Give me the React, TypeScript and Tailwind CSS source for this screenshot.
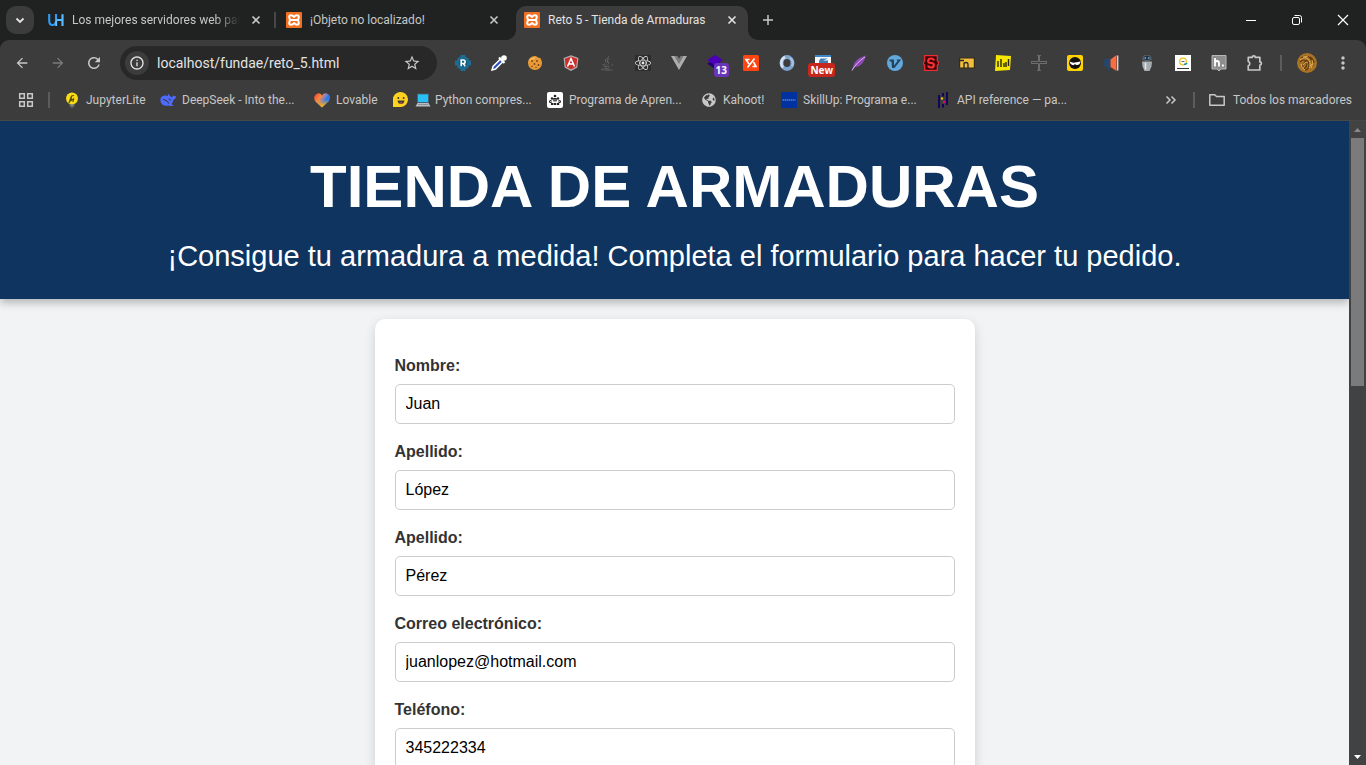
import type { ReactNode } from "react";
import { FaJava, FaReact, FaGlobeAmericas } from "react-icons/fa";
import {
  MdArrowBack,
  MdArrowForward,
  MdRefresh,
  MdStarBorder,
  MdInfoOutline,
  MdMoreVert,
} from "react-icons/md";

function Svg({ children, size = "size-4" }: { children: ReactNode; size?: string }) {
  return (
    <svg viewBox="0 0 16 16" className={`${size} shrink-0`} fill="none" aria-hidden="true">
      {children}
    </svg>
  );
}

const CloseGlyph = () => (
  <Svg>
    <path d="M4.5 4.5l7 7M11.5 4.5l-7 7" stroke="currentColor" strokeWidth="1.6" />
  </Svg>
);

const Xampp = () => (
  <Svg>
    <rect width="16" height="16" rx="1" fill="#f37021" />
    <path
      d="M8 5Q6.500 3.200 5 3.200 3.200 3.200 3.200 5q0 1.800 1.200 3-1.200 1.200-1.200 3 0 1.800 1.800 1.800T8 11q1.500 1.800 3 1.800 1.800 0 1.800-1.800 0-1.800-1.200-3 1.200-1.200 1.200-3 0-1.800-1.800-1.800T8 5z"
      stroke="#fff"
      strokeWidth="2"
      strokeLinejoin="round"
    />
    <path d="M5 8h6" stroke="#fff" strokeWidth="2" />
  </Svg>
);

const HostingLogo = () => (
  <Svg>
    <path d="M1.200 2v6.200c0 3.200 1.200 4.800 3.400 4.800S8 11.400 8 8.600V2" stroke="#2f9bf5" strokeWidth="2.100" />
    <path d="M8.200 8H14M14.500 2.200V14" stroke="#56b8ff" strokeWidth="2.200" />
    <path d="M8.200 9V14" stroke="#6fc4ff" strokeWidth="1.800" />
  </Svg>
);

const tabs = [
  { title: "Los mejores servidores web para", icon: <HostingLogo />, active: false, fade: true },
  { title: "¡Objeto no localizado!", icon: <Xampp />, active: false, fade: false },
  { title: "Reto 5 - Tienda de Armaduras", icon: <Xampp />, active: true, fade: false },
];

function TabStrip() {
  return (
    <div className="flex h-10 items-end bg-[#1f2221] text-[#c7c7c7]">
      <button aria-label="Buscar pestañas" className="mb-1.5 ml-1.5 flex size-7 shrink-0 items-center justify-center rounded-[10px] bg-[#3c3c3c] text-[#e3e3e3]">
        <Svg>
          <path d="M4.500 6.500L8 10l3.500-3.500" stroke="currentColor" strokeWidth="1.800" />
        </Svg>
      </button>
      <div className="ml-1.5 flex h-[34px] gap-1.5">
        {tabs.map((t, i) => (
          <div
            key={t.title}
            className={`relative flex w-[232px] items-center px-2 pb-1.5 ${
              t.active ? "rounded-t-[10px] bg-[#3c3c3c] text-[#e3e3e3]" : ""
            }`}
          >
            {t.icon}
            <span
              className={`ml-2 flex-1 overflow-hidden whitespace-nowrap text-[12px] leading-4 ${
                t.fade ? "mask-r-from-85% mask-r-to-100%" : ""
              }`}
            >
              {t.title}
            </span>
            <button aria-label="Cerrar pestaña" className="ml-2 shrink-0">
              <CloseGlyph />
            </button>
            {i === 0 && <span className="absolute -right-1 top-1.5 h-4 w-0.5 bg-[#474948]" />}
            {t.active && (
              <>
                <svg viewBox="0 0 10 10" className="absolute -left-2.5 bottom-0 size-2.5" aria-hidden="true">
                  <path d="M10 0v10H0A10 10 0 0 0 10 0z" fill="#3c3c3c" />
                </svg>
                <svg viewBox="0 0 10 10" className="absolute -right-2.5 bottom-0 size-2.5" aria-hidden="true">
                  <path d="M0 0v10h10A10 10 0 0 1 0 0z" fill="#3c3c3c" />
                </svg>
              </>
            )}
          </div>
        ))}
      </div>
      <button aria-label="Nueva pestaña" className="mb-1.5 ml-1.5 flex size-7 items-center justify-center">
        <Svg>
          <path d="M8 3v10M3 8h10" stroke="currentColor" strokeWidth="1.500" />
        </Svg>
      </button>
      <div className="ml-auto flex h-10 text-white">
        <button aria-label="Minimizar" className="flex w-[46px] items-center justify-center">
          <Svg><path d="M3 8.500h10" stroke="currentColor" /></Svg>
        </button>
        <button aria-label="Restaurar" className="flex w-[46px] items-center justify-center">
          <Svg>
            <rect x="3.500" y="5.500" width="7" height="7" rx="1.500" stroke="currentColor" />
            <path d="M5.500 3.500h5a2 2 0 0 1 2 2v5" stroke="currentColor" />
          </Svg>
        </button>
        <button aria-label="Cerrar" className="flex w-[46px] items-center justify-center">
          <Svg><path d="M3 3l10 10M13 3L3 13" stroke="currentColor" strokeWidth="1.200" /></Svg>
        </button>
      </div>
    </div>
  );
}

const extensions: { name: string; icon: ReactNode; badge?: string; badgeClass?: string }[] = [
  {
    name: "R",
    icon: (
      <Svg>
        <path d="M5.500 0h5v2l3 1v2.500H16v5h-2.500V13l-3 1v2h-5v-2l-3-1v-2.500H0v-5h2.500V3l3-1z" fill="#1b6f96" />
        <circle cx="8" cy="8" r="4.600" fill="#155c80" />
        <path d="M6.200 11.200V5h2.200a1.700 1.700 0 0 1 0 3.500H6.200M8.300 8.500l1.900 2.700" stroke="#fff" strokeWidth="1.600" />
      </Svg>
    ),
  },
  {
    name: "Cuentagotas",
    icon: (
      <Svg>
        <path d="M1 15l1-3.500 7.500-7.500 2.500 2.500L4.500 14z" fill="#2c4fc4" stroke="#fff" strokeWidth="1.500" />
        <path d="M8 2.500L13.500 8M10.500 5.500L13.500 2.500" stroke="#fff" strokeWidth="2.200" />
        <circle cx="13" cy="3" r="2.800" fill="#fff" />
      </Svg>
    ),
  },
  {
    name: "Cookies",
    icon: (
      <Svg>
        <path d="M8 1c1 0 1.500.5 2.500 1 .5 1 2 .8 3 1 .3 1.500 1.500 3 1.500 5a7 7 0 0 1-14 0c0-4 3-7 7-7z" fill="#e99a35" />
        <path d="M3 5.500a6 5 0 0 1 5-2.500" stroke="#f7c268" strokeWidth="1.500" />
        <g fill="#74421b"><circle cx="5" cy="6" r=".9" /><circle cx="10" cy="6" r=".9" /><circle cx="7.500" cy="9" r=".9" /><circle cx="11.500" cy="10" r=".9" /><circle cx="5" cy="11.500" r=".8" /><circle cx="9" cy="12.500" r=".7" /></g>
      </Svg>
    ),
  },
  {
    name: "Angular",
    icon: (
      <Svg>
        <path d="M8 .3l7.400 2.600-1.100 9.600L8 15.900l-6.300-3.400L.6 2.900z" fill="#b3b3b3" />
        <path d="M8 1.500l6.200 2.200-1 8L8 14.600l-5.200-2.900-1-8z" fill="#c9302c" />
        <path d="M4.500 11.500L8 3.500l3.500 8M5.800 9h4.400" stroke="#fff" strokeWidth="1.500" />
      </Svg>
    ),
  },
  { name: "Java", icon: <FaJava className="size-4 text-[#6b6b6b]" /> },
  {
    name: "React",
    icon: (
      <span className="flex size-4 items-center justify-center bg-[#2d2d2d]">
        <FaReact className="size-4 text-[#e8e8e8]" />
      </span>
    ),
  },
  {
    name: "Vue",
    icon: (
      <Svg>
        <path d="M0 1h4l4 7 4-7h4L8 15z" fill="#adadad" />
        <path d="M3.500 1h3L8 3.800 9.500 1h3L8 9z" fill="#7b7b7b" />
      </Svg>
    ),
  },
  {
    name: "Capas",
    badge: "13",
    badgeClass: "bg-[#6a35b8] -right-1.5",
    icon: (
      <Svg>
        <path d="M0 8.500L8 5l8 4-8 5z" fill="#240070" />
        <path d="M0 5l8-5 8 5-8 5.500z" fill="#4b00b8" />
      </Svg>
    ),
  },
  {
    name: "Código",
    icon: (
      <Svg>
        <rect width="16" height="16" rx="1.500" fill="#fc4510" />
        <path d="M6.500 4.500H3L6 9M11.500 3.500L4.500 12.500M10.500 7l2.500 4.500H9.500" stroke="#fff" strokeWidth="1.600" />
      </Svg>
    ),
  },
  {
    name: "Anillo",
    icon: (
      <Svg>
        <ellipse cx="8" cy="8" rx="5.500" ry="6" stroke="#7fa5cf" strokeWidth="4" />
        <path d="M4 12.500A6 6.500 0 0 1 6 2" stroke="#d7e3f1" strokeWidth="2.500" />
        <path d="M11 3a6 6 0 0 1 2 8" stroke="#a9c2e0" strokeWidth="2" />
      </Svg>
    ),
  },
  {
    name: "Novedades",
    badge: "New",
    badgeClass: "bg-[#c5271d] -right-1",
    icon: (
      <Svg>
        <rect width="16" height="16" fill="#f5f7fa" />
        <path d="M0 0h16v2H0z" fill="#3f86c4" />
        <path d="M13 3.500H6Q4 4 4 8h9V5.500H8" fill="#3f7fb5" />
      </Svg>
    ),
  },
  {
    name: "Pluma",
    icon: (
      <Svg>
        <path d="M15 .5C13 1 5 3 2.500 10L1 15l2.500-2.500C11 11 13 7 15 .5z" fill="#8b49b4" />
        <path d="M1 15.500C4 10 8 6 14 2" stroke="#d9b6ec" strokeWidth="1" />
      </Svg>
    ),
  },
  {
    name: "V",
    icon: (
      <Svg>
        <circle cx="8" cy="8" r="8" fill="#61a8dd" />
        <path d="M2.500 4.500H7v6L10.500 6 9.500 4.500h4.700L7.500 13H5L4.500 6.500h-2z" fill="#26435c" />
      </Svg>
    ),
  },
  {
    name: "S",
    icon: (
      <Svg>
        <path d="M1.700.7h12.600v5L16 8l-1.700 2.300v5H1.700v-5L0 8l1.700-2.300z" fill="#3b0608" stroke="#f02b30" strokeWidth="1.300" />
        <path d="M11 5.500Q10.500 3.500 8 3.500T5.200 5.800 8 8t2.800 2.300T8 12.500 5 10.500" stroke="#ff3035" strokeWidth="2.200" />
      </Svg>
    ),
  },
  {
    name: "Carpeta",
    icon: (
      <Svg>
        <path d="M.6 3h14.800v10H.6z" fill="#f0bd3d" stroke="#352b16" strokeWidth="1.200" />
        <path d="M1 5.500h4M5 13V7.500M5 9q0-1.500 2-1.500T9 9.500V13" stroke="#262626" strokeWidth="1.300" />
      </Svg>
    ),
  },
  {
    name: "Gráfico",
    icon: (
      <Svg>
        <path d="M1 0l15 1-1 14-15 1z" fill="#f7e600" />
        <path d="M3 12V6M6 12V4M9 12V8M11 12V7M13.500 11V4" stroke="#29270d" strokeWidth="1.400" />
      </Svg>
    ),
  },
  {
    name: "Cruz",
    icon: (
      <Svg>
        <path d="M7.500 1v5.500H1M8.500 1v5.500H15M7.500 15V8.500H1M8.500 15V8.500H15M6 .6h4M6 15.400h4M.6 6v3M15.400 6v3" stroke="#747474" strokeWidth=".9" />
      </Svg>
    ),
  },
  {
    name: "Ninja",
    icon: (
      <Svg>
        <rect width="16" height="16" rx="2" fill="#ffd400" />
        <circle cx="8" cy="8" r="6" fill="#111" />
        <path d="M2.500 6.500Q5.500 8 8 7.500T13.500 6.500Q13 10 10 10 8.500 10 8 9 7 10.500 5.500 10 3 9.500 2.500 6.500z" fill="#fff" />
      </Svg>
    ),
  },
  {
    name: "Megáfono",
    icon: (
      <Svg>
        <path d="M8 3.500H4Q.3 4 .3 8T4 12l1 4 1.500-.5.500-3.500h1z" fill="#29466a" />
        <path d="M7.500 4.500L13.500 0v16l-6-4z" fill="#fb6c3f" />
        <path d="M14.700.5v15" stroke="#c8d1dd" strokeWidth="1.400" />
      </Svg>
    ),
  },
  {
    name: "Robot",
    icon: (
      <Svg>
        <path d="M3 6.500h10l-.5 5L10.500 16h-5l-2-4.500z" fill="#a8adb2" />
        <path d="M4 4.500Q4 0 8 0t4 4.500q-4 2.500-8 0z" fill="#25303a" stroke="#89939c" strokeWidth=".6" />
        <path d="M6.500 7.500v7" stroke="#e4e8ec" strokeWidth="1.500" />
        <path d="M5.500 3h1.600M8.900 3h1.600" stroke="#69b7ff" strokeWidth="1.300" />
      </Svg>
    ),
  },
  {
    name: "Q",
    icon: (
      <Svg>
        <rect width="16" height="16" fill="#fff" />
        <circle cx="8" cy="6.500" r="3.300" stroke="#f1c21b" strokeWidth="1.300" />
        <path d="M6.500 6.500h3" stroke="#666" />
        <path d="M9 9q2 .8 3-1" stroke="#168dac" strokeWidth="1.500" />
        <path d="M2 13.500h12" stroke="#333" strokeWidth="1" />
      </Svg>
    ),
  },
  {
    name: "Hypothesis",
    icon: (
      <Svg>
        <path d="M1 .5h14V14H10l-2 2-2-2H1z" fill="#8d8d8d" stroke="#b7b7b7" />
        <path d="M4 3v8.500M4 8q0-2 2-2t2 2v3.500M11 10.500h1.800" stroke="#fff" strokeWidth="1.800" />
      </Svg>
    ),
  },
  {
    name: "Extensiones",
    icon: (
      <Svg size="size-[18px]">
        <path d="M2 3h3.500a1.400 1.400 0 0 1 2.800 0h4v4a1.400 1.400 0 0 1 0 2.800v4.400H2v-3.700a2 2 0 0 0 0-3.800z" stroke="#c7c7c7" strokeWidth="1.500" strokeLinejoin="round" />
      </Svg>
    ),
  },
];

function Toolbar() {
  return (
    <div className="flex h-[46px] items-center rounded-t-[9px] bg-[#3c3c3c] pl-1 pr-[5px] text-[#c7c7c7]">
      <button aria-label="Atrás" className="flex w-9 justify-center"><MdArrowBack className="size-4" /></button>
      <button aria-label="Adelante" className="flex w-9 justify-center text-[#7a7a7a]"><MdArrowForward className="size-4" /></button>
      <button aria-label="Recargar" className="flex w-9 justify-center"><MdRefresh className="size-[18px]" /></button>
      <div className="mx-2 flex h-[34px] min-w-0 flex-1 items-center rounded-full bg-[#282828] pl-[5px] pr-4">
        <button aria-label="Información del sitio" className="flex size-6 shrink-0 items-center justify-center rounded-full bg-[#3c3c3c]">
          <MdInfoOutline className="size-4 text-[#e3e3e3]" />
        </button>
        <input
          aria-label="Barra de direcciones"
          defaultValue="localhost/fundae/reto_5.html"
          className="ml-2 min-w-0 flex-1 bg-transparent text-[14px] leading-5 text-[#e3e3e3] outline-none"
        />
        <button aria-label="Añadir a marcadores"><MdStarBorder className="size-[18px]" /></button>
      </div>
      {extensions.map((e) => (
        <button key={e.name} aria-label={e.name} className="flex w-9 shrink-0 justify-center">
          <span className="relative flex size-4 items-center justify-center">
            {e.icon}
            {e.badge && (
              <span className={`absolute -bottom-1.5 flex h-3.5 items-center rounded-[3px] px-0.5 font-['Open_Sans',sans-serif] text-[10px] font-bold leading-3 text-white ${e.badgeClass}`}>
                {e.badge}
              </span>
            )}
          </span>
        </button>
      ))}
      <span className="mx-[7px] h-4 w-0.5 shrink-0 bg-[#5c5c5c]" />
      <button aria-label="Perfil" className="flex w-9 shrink-0 justify-center">
        <svg viewBox="0 0 20 20" className="size-5" aria-hidden="true">
          <circle cx="10" cy="10" r="10" fill="#a87325" />
          <path d="M4 5q6-4 9 0t3 8M3 9q4-4 6 0t-2 7M9 7q4 2 3 6t-4 4M13 4q4 3 4 6M5 14l3-5 4 2" fill="none" stroke="#5f380e" strokeWidth="1.200" />
          <path d="M3 7q5-4 8-1t2 7M6 12q2-4 5-2M12 15l3-4M6 4l5-1M15 7q2 4-1 8M4 11q0 4 4 6" fill="none" stroke="#e0ad52" />
        </svg>
      </button>
      <button aria-label="Menú" className="flex w-9 shrink-0 justify-center"><MdMoreVert className="size-5" /></button>
    </div>
  );
}

const bookmarks: { label: string; width: string; icon: ReactNode; laptop?: boolean }[] = [
  {
    label: "JupyterLite",
    width: "w-24",
    icon: (
      <Svg>
        <path d="M5.500 12h5v2L8 16l-2.500-2z" fill="#707070" />
        <circle cx="8" cy="6.500" r="6" fill="#f7dc18" />
        <path d="M5 11L7.500 4 7 8.500 9.500 7 9 10M7.500 4L10 3.500" stroke="#5a4b08" strokeWidth="1.200" />
      </Svg>
    ),
  },
  {
    label: "DeepSeek - Into the...",
    width: "w-[154px]",
    icon: (
      <Svg>
        <path d="M.5 6.500Q2 3 6 3.500l1.500.8Q8.500 3 8 1.500q1 1.500 3.500 4Q13 5 13 3.500q1.500 1 3 .5 0 3-2.500 3.500-.5 3-2 4.500l2 1.500q-3 1-5 0Q2 14.500.7 10q-.4-2-.2-3.500z" fill="#4d6bfe" />
        <path d="M3 7.500q3 0 6 4M8.500 7q1.500 0 2 1.500" stroke="#3c3c3c" strokeWidth="1.200" />
      </Svg>
    ),
  },
  {
    label: "Lovable",
    width: "w-[79px]",
    icon: (
      <Svg>
        <defs>
          <linearGradient id="heart" x1="0" y1="0" x2="1" y2=".6">
            <stop offset="0.1" stopColor="#f5503c" /><stop offset=".4" stopColor="#f58a3a" /><stop offset=".6" stopColor="#8f7fc0" /><stop offset=".75" stopColor="#2a7de8" />
          </linearGradient>
          <linearGradient id="heartBase" x1="0" y1="0" x2="0" y2="1">
            <stop offset=".45" stopColor="#f5a623" stopOpacity="0" /><stop offset=".85" stopColor="#f7a823" />
          </linearGradient>
        </defs>
        <path d="M8 15.500L1.500 9.500Q-.5 7 .5 4.200 2 1 5 1.200 7 1.500 8 3.500 9.500 1 12 1.200q3 .3 3.800 3 .6 3-1.300 5.300z" fill="url(#heart)" />
        <path d="M8 15.500L1.500 9.500Q-.5 7 .5 4.200 2 1 5 1.200 7 1.500 8 3.500 9.500 1 12 1.200q3 .3 3.800 3 .6 3-1.300 5.300z" fill="url(#heartBase)" />
      </Svg>
    ),
  },
  {
    label: "Python compres...",
    laptop: true,
    width: "w-[154px]",
    icon: (
      <Svg>
        <path d="M0 15V8a7.500 7.500 0 1 1 8 7z" fill="#ffd21e" />
        <circle cx="5.300" cy="6" r="1" fill="#3a3b45" /><circle cx="10.700" cy="6" r="1" fill="#3a3b45" />
        <path d="M4.500 8.500h7q-.5 3.500-3.500 3.500T4.500 8.500z" fill="#3a3b45" />
        <path d="M6.500 11q1.500-1.500 3 0-1.500 1.400-3 0z" fill="#f2503f" />
      </Svg>
    ),
  },
  {
    label: "Programa de Apren...",
    width: "w-[154px]",
    icon: (
      <Svg>
        <rect width="16" height="16" rx="2" fill="#fff" />
        <g fill="#222"><circle cx="8" cy="4" r="1.300" /><circle cx="5" cy="6.500" r="1.200" /><circle cx="11" cy="6.500" r="1.200" /><circle cx="3.500" cy="9.500" r="1.500" /><circle cx="12.500" cy="9.500" r="1.500" /><rect x="6" y="6" width="4" height="4" rx="1" /><rect x="4" y="11" width="2.500" height="2" /><rect x="7" y="11" width="2" height="2" /><rect x="9.700" y="11" width="2.500" height="2" /></g>
        <path d="M6 8h4M3 9.500h10" stroke="#fff" strokeWidth=".6" />
      </Svg>
    ),
  },
  { label: "Kahoot!", width: "w-20", icon: <FaGlobeAmericas className="mx-px size-[14px] shrink-0 text-[#c7c7c7]" /> },
  {
    label: "SkillUp: Programa e...",
    width: "w-[154px]",
    icon: (
      <Svg>
        <rect width="16" height="16" fill="#0032a0" />
        <path d="M1.500 8h13" stroke="#8aa3dd" strokeWidth="1.200" strokeDasharray="1.500 .5" />
      </Svg>
    ),
  },
  {
    label: "API reference — pa...",
    width: "w-[150px]",
    icon: (
      <Svg>
        <path d="M4 3v13M12 0v13" stroke="#150458" strokeWidth="2" />
        <path d="M8 1v3.500M8 12v3.500" stroke="#150458" strokeWidth="2" />
        <path d="M7 5.500v2" stroke="#ffca00" strokeWidth="2" /><path d="M9 9v2" stroke="#e70488" strokeWidth="2" />
      </Svg>
    ),
  },
];

function Bookmarks() {
  return (
    <nav aria-label="Marcadores" className="flex h-[35px] items-center border-b border-[#474747] bg-[#3c3c3c] pb-1.5 text-[12px] leading-4 text-[#c7c7c7]">
      <button aria-label="Grupos de pestañas" className="ml-[18px]">
        <Svg>
          <path d="M1.700 1.700h4.600v4.600H1.700zM9.700 1.700h4.600v4.600H9.700zM1.700 9.700h4.600v4.600H1.700zM9.700 9.700h4.600v4.600H9.700z" stroke="currentColor" strokeWidth="1.500" />
        </Svg>
      </button>
      <span className="ml-3.5 mr-1.5 h-4 w-0.5 bg-[#5c5c5c]" />
      {bookmarks.map((b) => (
        <a key={b.label} href="#" className={`flex shrink-0 items-center gap-1.5 whitespace-nowrap pl-2 ${b.width}`}>
          {b.icon}
          <span className="flex items-center gap-1">
            {b.laptop && (
              <Svg>
                <rect x="2.500" y="2" width="11" height="8.500" fill="#29c0f5" stroke="#4a5f70" strokeWidth=".8" />
                <path d="M2.500 11h11l2 3.500H.5z" fill="#b9bec4" />
                <path d="M3 12.500h10" stroke="#7d858c" strokeWidth=".8" />
              </Svg>
            )}
            {b.label}
          </span>
        </a>
      ))}
      <button aria-label="Más marcadores" className="ml-auto">
        <Svg>
          <path d="M3.500 4.500L7 8l-3.500 3.500M8.500 4.500L12 8l-3.500 3.500" stroke="currentColor" strokeWidth="1.500" />
        </Svg>
      </button>
      <span className="mx-3.5 h-4 w-0.5 bg-[#5c5c5c]" />
      <a href="#" className="mr-3.5 flex items-center gap-2 whitespace-nowrap">
        <Svg>
          <path d="M.8 2.800h5l1.700 1.700h7.700v8.700H.8z" stroke="currentColor" strokeWidth="1.500" strokeLinejoin="round" />
        </Svg>
        <span>Todos los marcadores</span>
      </a>
    </nav>
  );
}

const fields = [
  { id: "nombre", label: "Nombre:", value: "Juan", type: "text" },
  { id: "apellido1", label: "Apellido:", value: "López", type: "text" },
  { id: "apellido2", label: "Apellido:", value: "Pérez", type: "text" },
  { id: "correo", label: "Correo electrónico:", value: "juanlopez@hotmail.com", type: "email" },
  { id: "telefono", label: "Teléfono:", value: "345222334", type: "tel" },
];

function StorePage() {
  return (
    <main className="min-w-0 flex-1 overflow-hidden bg-[#f2f3f5] font-['Liberation_Sans',Arial,sans-serif]">
      <header className="relative bg-[#0f3460] p-5 text-center text-white shadow-[0_4px_8px_rgba(0,0,0,0.25)]">
        <h1 className="text-[60px] font-bold leading-[92px]">TIENDA DE ARMADURAS</h1>
        <p className="text-[29px] leading-[46px]">
          ¡Consigue tu armadura a medida! Completa el formulario para hacer tu pedido.
        </p>
      </header>
      <form className="mx-auto mt-5 max-w-[600px] rounded-[10px] bg-white px-5 pb-5 pt-[34px] shadow-[0_4px_12px_rgba(0,0,0,0.15)]">
        {fields.map((f) => (
          <div key={f.id} className="mb-[15px]">
            <label htmlFor={f.id} className="mb-[5px] block text-[16px] font-bold leading-[26px] text-[#333]">
              {f.label}
            </label>
            <input
              id={f.id}
              type={f.type}
              defaultValue={f.value}
              className="block h-10 w-full rounded-[5px] border border-[#ccc] bg-white px-2.5 text-[16px] text-black"
            />
          </div>
        ))}
      </form>
    </main>
  );
}

function Scrollbar() {
  return (
    <div className="flex w-[17px] shrink-0 flex-col items-center bg-[#424242]">
      <svg viewBox="0 0 17 17" className="size-[17px]" aria-hidden="true"><path d="M5 11h7L8.500 7z" fill="#8a8a8a" /></svg>
      <div className="flex w-[13px] flex-1 flex-col">
        <div className="h-62 bg-[#7b7b7b]" />
      </div>
      <svg viewBox="0 0 17 17" className="size-[17px]" aria-hidden="true"><path d="M5 7h7l-3.500 4z" fill="#fff" /></svg>
    </div>
  );
}

export default function App() {
  return (
    <div className="flex h-screen flex-col overflow-hidden bg-[#1f2221] font-['Roboto','Open_Sans',sans-serif]">
      <TabStrip />
      <Toolbar />
      <Bookmarks />
      <div className="flex min-h-0 flex-1">
        <StorePage />
        <Scrollbar />
      </div>
    </div>
  );
}
